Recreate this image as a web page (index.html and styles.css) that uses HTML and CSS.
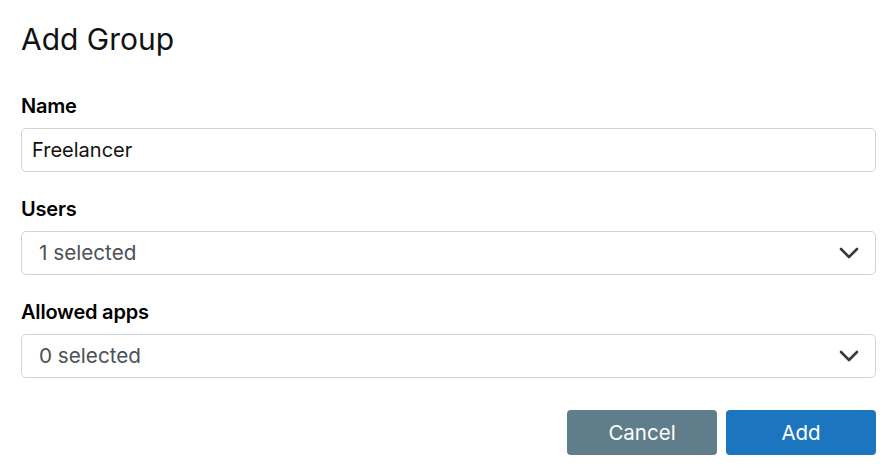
FILE: index.html
```html
<!DOCTYPE html>
<html lang="en">
<head>
<meta charset="utf-8">
<title>Add Group</title>
<link rel="stylesheet" href="styles.css">
</head>
<body>
<div class="dialog">
  <h1 class="title">Add Group</h1>
  <form class="form">
    <div class="field">
      <label class="label" for="name">Name</label>
      <input class="input" id="name" type="text" value="Freelancer">
    </div>
    <div class="field">
      <label class="label">Users</label>
      <div class="select">
        <span class="select-text">1 selected</span>
        <svg class="chevron" width="20" height="12" viewBox="0 0 20 12"><path d="M2 2 L10 10 L18 2" fill="none" stroke="#343a40" stroke-width="2.6" stroke-linecap="round" stroke-linejoin="round"/></svg>
      </div>
    </div>
    <div class="field">
      <label class="label">Allowed apps</label>
      <div class="select">
        <span class="select-text">0 selected</span>
        <svg class="chevron" width="20" height="12" viewBox="0 0 20 12"><path d="M2 2 L10 10 L18 2" fill="none" stroke="#343a40" stroke-width="2.6" stroke-linecap="round" stroke-linejoin="round"/></svg>
      </div>
    </div>
    <div class="actions">
      <button type="button" class="btn btn-cancel">Cancel</button>
      <button type="button" class="btn btn-add">Add</button>
    </div>
  </form>
</div>
</body>
</html>
```
FILE: styles.css
```css
* { box-sizing: border-box; }
html, body { margin: 0; padding: 0; background: #fff; }
body {
  font-family: Inter, "Noto Sans", "Liberation Sans", sans-serif;
  color: #000;
}
.dialog {
  padding: 22px 20px 0 21px;
}
.title {
  margin: 0;
  font-size: 30px;
  font-weight: 400;
  line-height: 35px;
  color: #111;
}
.form {
  margin: 37px 0 0 0;
  display: flex;
  flex-direction: column;
  gap: 25px;
}
.field {
  display: flex;
  flex-direction: column;
  gap: 10px;
}
.label {
  font-size: 20px;
  font-weight: 600;
  line-height: 24px;
  letter-spacing: -0.2px;
  color: #000;
}
.input {
  height: 44px;
  width: 100%;
  border: 1px solid #ced4da;
  border-radius: 5px;
  padding: 0 10px;
  font-family: inherit;
  font-size: 20px;
  color: #111;
  background: #fff;
  outline: none;
}
.select {
  height: 44px;
  border: 1px solid #ced4da;
  border-radius: 5px;
  padding: 0 16px 1px 17px;
  display: flex;
  align-items: center;
  justify-content: space-between;
  background: #fff;
}
.select-text {
  font-size: 20.7px;
  color: #4b5259;
}
.chevron { display: block; margin-top: 1px; }
.actions {
  margin-top: 7px;
  display: flex;
  justify-content: flex-end;
  gap: 9px;
}
.btn {
  width: 150px;
  height: 45px;
  border: none;
  border-radius: 4px;
  font-family: inherit;
  font-size: 20.5px;
  color: #fff;
}
.btn-cancel { background: #607d8b; }
.btn-add { background: #1c75bf; }
```
